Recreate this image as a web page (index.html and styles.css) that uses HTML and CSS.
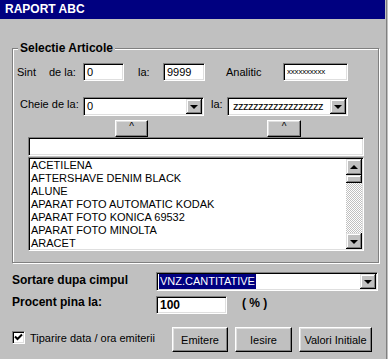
FILE: index.html
```html
<!DOCTYPE html>
<html>
<head>
  <title>Raport ABC</title>
  <link rel="stylesheet" href="styles.css">
</head>
<body>
  <div class="window">
    <!-- Title bar -->
    <div class="titlebar">RAPORT ABC</div>

    <!-- Selectie Articole -->
    <fieldset class="group">
      <legend>Selectie Articole</legend>

      <div class="row row-range">
        <span class="lbl lbl-sint">Sint</span>
        <span class="lbl lbl-dela">de la:</span>
        <div class="field w-from">0</div>
        <span class="lbl lbl-la">la:</span>
        <div class="field w-to">9999</div>
        <span class="lbl lbl-analitic">Analitic</span>
        <div class="field w-analitic">xxxxxxxxxx</div>
      </div>

      <div class="row row-key">
        <span class="lbl lbl-cheie">Cheie de la:</span>
        <div class="combo w-combo">
          <span class="combo-text">0</span>
          <span class="drop"><i class="tri-down"></i></span>
        </div>
        <span class="lbl lbl-la2">la:</span>
        <div class="combo w-combo">
          <span class="combo-text zz">zzzzzzzzzzzzzzzzzz</span>
          <span class="drop"><i class="tri-down"></i></span>
        </div>
      </div>

      <div class="row row-caret">
        <div class="btn btn-caret first">^</div>
        <div class="btn btn-caret second">^</div>
      </div>

      <div class="field search"></div>

      <div class="listbox">
        <div class="items">
          <div>ACETILENA</div>
          <div>AFTERSHAVE DENIM BLACK</div>
          <div>ALUNE</div>
          <div>APARAT FOTO AUTOMATIC KODAK</div>
          <div>APARAT FOTO KONICA 69532</div>
          <div>APARAT FOTO MINOLTA</div>
          <div>ARACET</div>
        </div>
        <div class="scrollbar">
          <div class="sb-btn"><i class="tri-up"></i></div>
          <div class="sb-thumb"></div>
          <div class="sb-track"></div>
          <div class="sb-btn"><i class="tri-down"></i></div>
        </div>
      </div>
    </fieldset>

    <!-- Options -->
    <div class="options">
      <div class="row row-sort">
        <span class="lbl-bold w-sort">Sortare dupa cimpul</span>
        <div class="combo w-sortcombo">
          <span class="combo-text"><span class="selected">VNZ.CANTITATIVE</span></span>
          <span class="drop"><i class="tri-down"></i></span>
        </div>
      </div>

      <div class="row row-pct">
        <span class="lbl-bold w-sort pct-lbl">Procent pina la:</span>
        <div class="field w-pct">100</div>
        <span class="pct-unit">( % )</span>
      </div>

      <div class="row row-actions">
        <div class="check-wrap">
          <span class="checkbox">
            <svg width="9" height="9" viewBox="0 0 9 9"><polyline points="1,3.5 3.5,6 8,1.5" fill="none" stroke="#000" stroke-width="2"/></svg>
          </span>
          <span class="check-lbl">Tiparire data / ora emiterii</span>
        </div>
        <div class="btn btn-emit">Emitere</div>
        <div class="btn btn-exit">Iesire</div>
        <div class="btn btn-reset">Valori Initiale</div>
      </div>
    </div>
  </div>
</body>
</html>
```

FILE: styles.css
```css
/* Base */
* {
  box-sizing: border-box;
}

html, body {
  margin: 0;
  padding: 0;
}

body {
  width: 388px;
  height: 359px;
  overflow: hidden;
  background: #c0c0c0;
  color: #000;
  font-family: "Liberation Sans", Arial, sans-serif;
  font-size: 11px;
}

.window {
  width: 387px;
  height: 359px;
  border-right: 1px solid #808080;
}

/* Title bar */
.titlebar {
  height: 19px;
  margin-right: 1px;
  padding-left: 5px;
  background: #000080;
  color: #fff;
  font-weight: bold;
  font-size: 12px;
  line-height: 19px;
}

/* Group box */
.group {
  width: 367px;
  min-width: 0;
  margin: 22px 0 0 12px;
  padding: 0 0 11px 0;
  border: 1px solid #808080;
  box-shadow: 1px 1px 0 #fff, inset 1px 1px 0 #fff;
}

.group legend {
  margin-left: 5px;
  padding: 0 2px;
  background: #c0c0c0;
  font-weight: bold;
  font-size: 12px;
  line-height: 14px;
}

.row {
  display: flex;
  align-items: center;
}

.lbl {
  white-space: nowrap;
}

/* Sunken controls */
.field {
  height: 18px;
  padding: 0 3px;
  background: #fff;
  border: 1px solid;
  border-color: #808080 #fff #fff #808080;
  box-shadow: inset 1px 1px 0 #000, inset -1px -1px 0 #dfdfdf;
  line-height: 16px;
  white-space: nowrap;
  overflow: hidden;
}

.combo {
  display: flex;
  height: 19px;
  padding: 1px;
  background: #fff;
  border: 1px solid;
  border-color: #808080 #fff #fff #808080;
  box-shadow: inset 1px 1px 0 #000, inset -1px -1px 0 #dfdfdf;
}

.combo-text {
  flex: 1;
  padding-left: 2px;
  line-height: 15px;
  white-space: nowrap;
  overflow: hidden;
}

.drop {
  display: flex;
  align-items: center;
  justify-content: center;
  width: 16px;
  background: #c0c0c0;
  box-shadow: inset -1px -1px 0 #000, inset 1px 1px 0 #dfdfdf,
    inset -2px -2px 0 #808080, inset 2px 2px 0 #fff;
}

.tri-down, .tri-up {
  display: block;
  width: 0;
  height: 0;
  border-left: 4px solid transparent;
  border-right: 4px solid transparent;
}

.tri-down {
  border-top: 4px solid #000;
  margin-top: 1px;
}

.tri-up {
  border-bottom: 4px solid #000;
  margin-bottom: 1px;
}

/* Raised buttons */
.btn {
  display: flex;
  align-items: center;
  justify-content: center;
  background: #c0c0c0;
  border: 1px solid;
  border-color: #fff #000 #000 #fff;
  box-shadow: inset -1px -1px 0 #808080, inset 1px 1px 0 #dfdfdf;
  white-space: nowrap;
}

/* Row: range */
.row-range {
  height: 18px;
  margin-top: 8px;
}

.lbl-sint { margin-left: 4px; width: 32px; }
.lbl-dela { width: 34px; }
.w-from { width: 41px; }
.lbl-la { margin-left: 14px; width: 25px; }
.w-to { width: 42px; }
.lbl-analitic { margin-left: 21px; width: 57px; }

.w-analitic {
  width: 65px;
  padding-left: 3px;
  font-size: 8px;
  letter-spacing: -0.2px;
}

/* Row: key */
.row-key {
  height: 19px;
  margin-top: 16px;
}

.lbl-cheie { margin-left: 7px; width: 63px; padding-bottom: 6px; }
.lbl-la2 { margin-left: 7px; width: 16px; padding-bottom: 6px; }
.w-combo { width: 121px; }

.zz {
  padding-left: 4px;
  letter-spacing: -0.5px;
}

/* Row: caret buttons */
.row-caret {
  height: 17px;
  margin-top: 4px;
}

.btn-caret {
  height: 17px;
  align-items: flex-start;
  font-size: 10px;
  line-height: 12px;
}

.btn-caret.first { margin-left: 102px; width: 33px; }
.btn-caret.second { margin-left: 119px; width: 34px; }

.search {
  width: 336px;
  height: 19px;
  margin-left: 15px;
}

/* List box */
.listbox {
  display: flex;
  width: 336px;
  height: 94px;
  margin: 1px 0 0 15px;
  padding: 1px;
  background: #fff;
  border: 1px solid;
  border-color: #808080 #fff #fff #808080;
  box-shadow: inset 1px 1px 0 #000, inset -1px -1px 0 #dfdfdf;
}

.items {
  flex: 1;
  padding-left: 1px;
  line-height: 13px;
  overflow: hidden;
  white-space: nowrap;
}

.scrollbar {
  display: flex;
  flex-direction: column;
  width: 16px;
}

.sb-btn, .sb-thumb {
  display: flex;
  align-items: center;
  justify-content: center;
  background: #c0c0c0;
  box-shadow: inset -1px -1px 0 #000, inset 1px 1px 0 #dfdfdf,
    inset -2px -2px 0 #808080, inset 2px 2px 0 #fff;
}

.sb-btn {
  height: 16px;
}

.sb-thumb {
  height: 8px;
}

.sb-track {
  flex: 1;
  background: repeating-conic-gradient(#c0c0c0 0 25%, #fff 0 50%) 0 0 / 2px 2px;
}

/* Options below the group */
.options {
  padding-left: 12px;
}

.lbl-bold {
  font-weight: bold;
  font-size: 12px;
  white-space: nowrap;
}

.w-sort { width: 144px; }

.row-sort {
  height: 19px;
  margin-top: 9px;
}

.row-sort .lbl-bold { padding-bottom: 3px; }

.w-sortcombo { width: 222px; }

.w-sortcombo .combo-text { padding-left: 1px; }

.selected {
  display: inline-block;
  padding: 0 1px;
  background: #000080;
  color: #fff;
  line-height: 15px;
}

.row-pct {
  height: 18px;
  margin-top: 5px;
}

.pct-lbl { padding-bottom: 7px; }

.w-pct {
  width: 71px;
  font-weight: bold;
  font-size: 12px;
}

.pct-unit {
  margin-left: 15px;
  padding-bottom: 4px;
  font-weight: bold;
  font-size: 12px;
}

/* Actions */
.row-actions {
  height: 25px;
  margin-top: 13px;
}

.check-wrap {
  display: flex;
  align-items: center;
  width: 160px;
  padding-bottom: 4px;
}

.checkbox {
  display: flex;
  align-items: center;
  justify-content: center;
  width: 13px;
  height: 13px;
  background: #fff;
  border: 1px solid;
  border-color: #808080 #fff #fff #808080;
  box-shadow: inset 1px 1px 0 #000, inset -1px -1px 0 #dfdfdf;
}

.check-lbl {
  margin-left: 5px;
  white-space: nowrap;
}

.row-actions .btn { height: 25px; }
.btn-emit { width: 56px; }
.btn-exit { width: 57px; margin-left: 7px; }
.btn-reset { width: 73px; margin-left: 7px; }
```
